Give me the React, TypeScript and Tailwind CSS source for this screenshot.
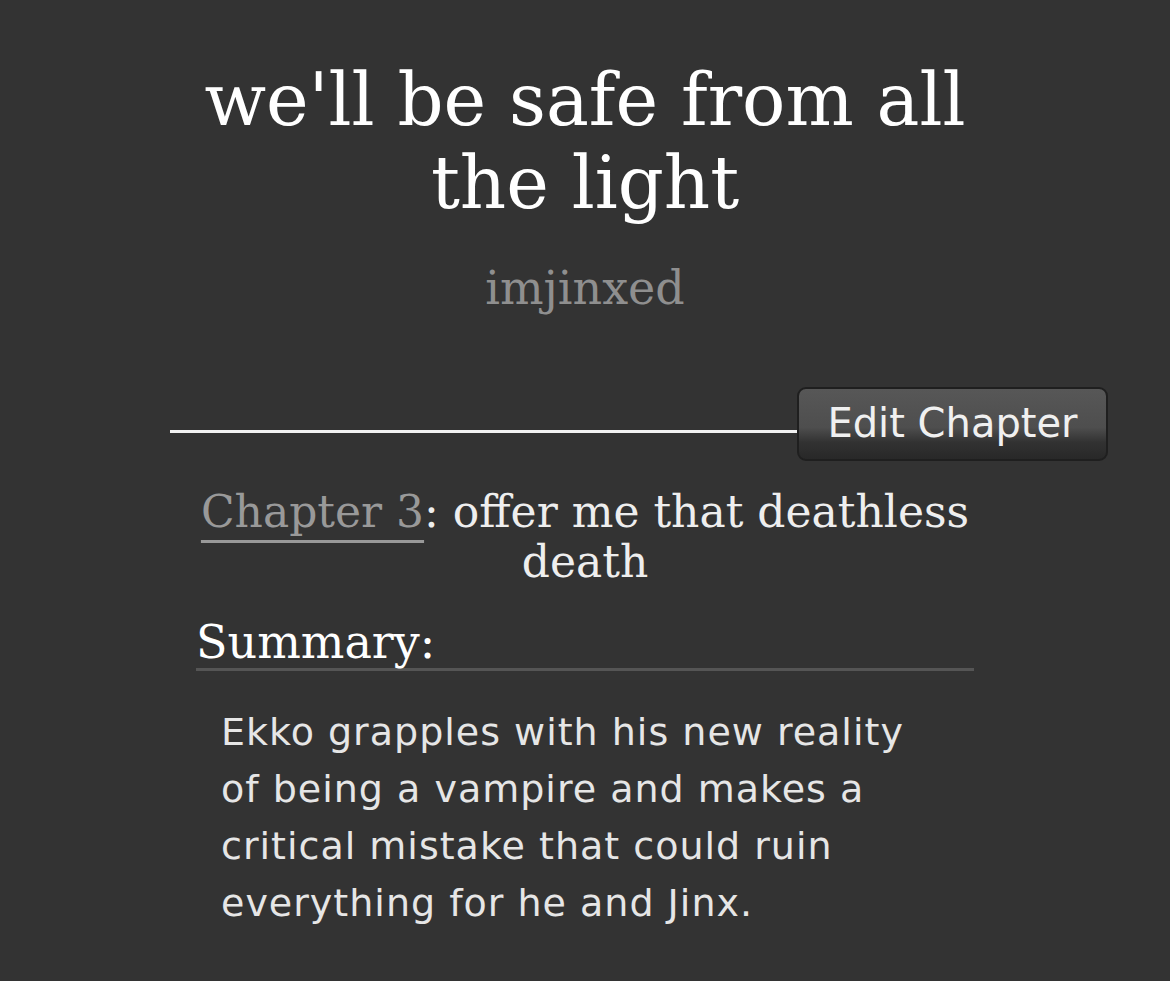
export default function App() {
  return (
    <div className="min-h-[981px] w-full bg-[#333333] pt-[59px]" style={{ fontFamily: '"DejaVu Serif", serif' }}>
      {/* Work title + author */}
      <h2 className="mx-auto w-[820px] text-center text-[72px] leading-[83px] text-white">
        we'll be safe from all the light
      </h2>
      <div className="mt-[38px] text-center text-[46px] leading-[50px] text-[#8f8f8f]">imjinxed</div>

      {/* Chapter nav row */}
      <div className="ml-[170px] mr-[62px] mt-[74px] flex items-start">
        <div className="mt-[43px] h-[3px] flex-1 bg-[#f2f2f2]" />
        <button
          className="h-[74px] w-[311px] rounded-[9px] border-2 border-[#1f1f1f] bg-[linear-gradient(to_bottom,#575757_0%,#4e4e4e_55%,#323232_76%,#282828_100%)] pb-[2px] text-[40px] text-[#f0f0f0]"
          style={{ fontFamily: '"DejaVu Sans", sans-serif' }}
        >
          Edit Chapter
        </button>
      </div>

      {/* Chapter title */}
      <h3 className="mx-auto mt-[26px] w-[840px] text-center text-[44px] leading-[50px] text-[#eeeeee]">
        <a className="text-[#999999] underline decoration-[3px] underline-offset-[13px]">Chapter 3</a>: offer me that deathless death
      </h3>

      {/* Summary */}
      <div className="mx-auto mt-[29px] w-[778px]">
        <h3 className="border-b-[3px] border-[#555555] text-[46px] leading-[52px] text-white">Summary:</h3>
        <blockquote
          className="mt-[33px] w-[740px] pl-[25px] text-[38px] leading-[57px] tracking-[1px] text-[#e6e6e6]"
          style={{ fontFamily: '"DejaVu Sans", sans-serif' }}
        >
          Ekko grapples with his new reality of being a vampire and makes a critical mistake that could ruin everything for he and Jinx.
        </blockquote>
      </div>
    </div>
  );
}
